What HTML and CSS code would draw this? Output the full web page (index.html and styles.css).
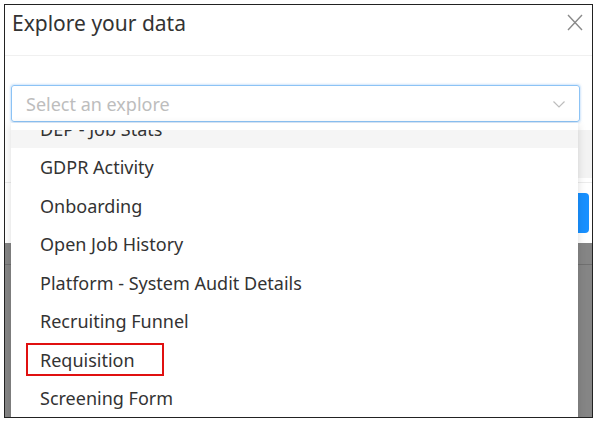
FILE: index.html
```html
<!DOCTYPE html>
<html lang="en">
<head>
  <meta charset="UTF-8">
  <meta name="viewport" content="width=device-width, initial-scale=1.0">
  <title>Explore your data</title>
  <link rel="stylesheet" href="styles.css">
</head>
<body>
  <div class="frame">
    <div class="modal">
      <div class="modal-header">
        <h2>Explore your data</h2>
        <svg class="close" width="16" height="17" viewBox="0 0 16 17">
          <path d="M1 1 L15 16 M15 1 L1 16" stroke="#8a8a8a" stroke-width="1.4" fill="none"/>
        </svg>
      </div>
      <div class="modal-body">
        <div class="select">
          <span class="placeholder">Select an explore</span>
          <svg class="chevron" width="12" height="7" viewBox="0 0 12 7">
            <path d="M0.5 0.5 L6 6 L11.5 0.5" stroke="#bdbdbd" stroke-width="1.2" fill="none"/>
          </svg>
        </div>
        <div class="preview"></div>
      </div>
      <div class="modal-footer">
        <button class="primary"></button>
      </div>
    </div>
    <div class="backdrop">
      <div class="backdrop-line"></div>
    </div>

    <!-- open explore menu, scrolled a little -->
    <div class="dropdown">
      <div class="viewport">
        <ul class="options">
          <li class="active">DEP - Job Stats</li>
          <li>GDPR Activity</li>
          <li>Onboarding</li>
          <li>Open Job History</li>
          <li>Platform - System Audit Details</li>
          <li>Recruiting Funnel</li>
          <li class="marked">Requisition</li>
          <li>Screening Form</li>
        </ul>
      </div>
    </div>
  </div>
</body>
</html>
```

FILE: styles.css
```css
body {
  margin: 0;
  background: #fff;
  font-family: "Noto Sans", "Open Sans", sans-serif;
  color: #333;
}

.frame {
  position: relative;
  margin: 4px 0 0 4px;
  width: 587px;
  height: 412px;
  border: 1px solid #222;
  overflow: hidden;
  background: #fff;
}

.modal {
  height: 238px;
  background: #fff;
  display: flex;
  flex-direction: column;
}

.modal-header {
  height: 50px;
  border-bottom: 1px solid #f0f0f0;
  display: flex;
  justify-content: space-between;
  padding: 0 9px 0 7px;
}

.modal-header h2 {
  margin: 4px 0 0;
  font-size: 21px;
  font-weight: 400;
  color: #333;
}

.close {
  margin-top: 9px;
}

.modal-body {
  padding: 29px 0 0 6px;
  height: 97px;
}

.select {
  height: 35px;
  width: 539px;
  border: 1px solid #8cc3f5;
  border-radius: 3px;
  box-shadow: 0 0 2px 1px rgba(120, 180, 240, 0.35);
  display: flex;
  align-items: center;
  justify-content: space-between;
  padding: 0 14px;
}

.placeholder {
  font-size: 18px;
  color: #bdbdbd;
}

.chevron {
  margin-top: 2px;
}

.preview {
  margin-top: 8px;
  height: 48px;
  background: #f3f3f3;
}

.modal-footer {
  flex: 1;
  border-top: 1px solid #ececec;
  display: flex;
  justify-content: flex-end;
  padding: 10px 3px 0 0;
}

.primary {
  width: 40px;
  height: 40px;
  border: none;
  border-radius: 4px;
  background: #1890ff;
}

.backdrop {
  height: 200px;
  background: #858585;
  padding-top: 21px;
  box-sizing: border-box;
}

.backdrop-line {
  height: 1px;
  background: #707070;
}

.dropdown {
  position: absolute;
  left: 6px;
  top: 118px;
  width: 567px;
  height: 300px;
  background: #fff;
  box-shadow: 0 2px 8px rgba(0, 0, 0, 0.15);
  padding-top: 7px;
  box-sizing: border-box;
}

.viewport {
  height: 100%;
  overflow: hidden;
}

.options {
  list-style: none;
  margin: -20.5px 0 0;
  padding: 0;
}

.options li {
  height: 38.5px;
  line-height: 38.5px;
  padding-left: 29px;
  font-size: 18px;
  color: #333;
  position: relative;
}

.options li.active {
  background: #f5f5f5;
}

.options li.marked::after {
  content: "";
  position: absolute;
  left: 15px;
  top: 2px;
  width: 134px;
  height: 29px;
  border: 2px solid #e01010;
}
```
